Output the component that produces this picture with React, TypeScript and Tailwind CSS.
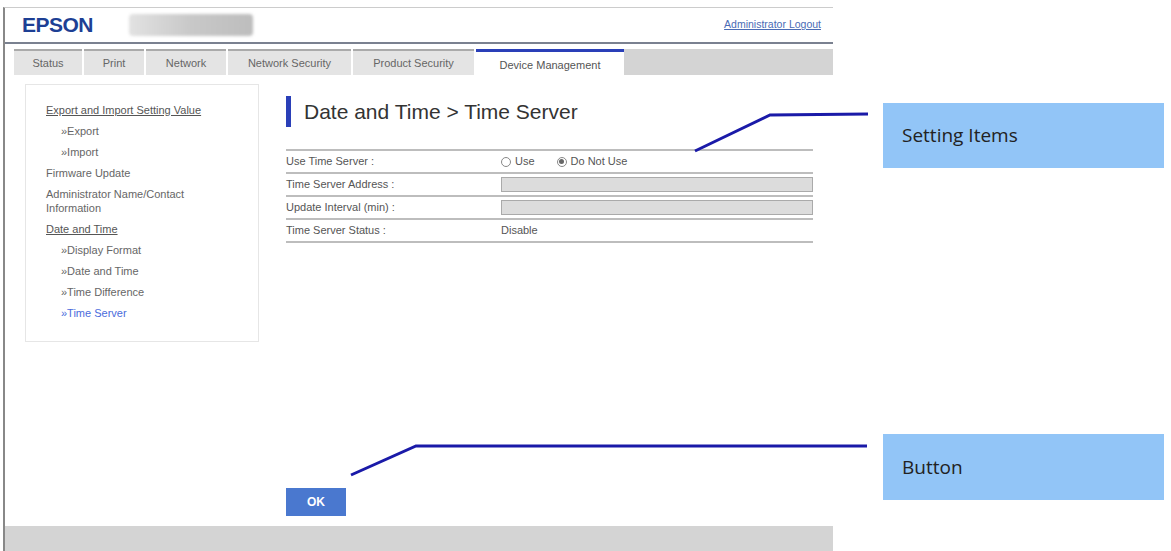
const tabs = [
  { label: "Status", w: "w-[68px]" },
  { label: "Print", w: "w-[60px]" },
  { label: "Network", w: "w-[80px]" },
  { label: "Network Security", w: "w-[123px]" },
  { label: "Product Security", w: "w-[121px]" },
];

const side = [
  { label: "Export and Import Setting Value", head: true },
  { label: "»Export", sub: true },
  { label: "»Import", sub: true },
  { label: "Firmware Update" },
  { label: "Administrator Name/Contact Information" },
  { label: "Date and Time", head: true },
  { label: "»Display Format", sub: true },
  { label: "»Date and Time", sub: true },
  { label: "»Time Difference", sub: true },
  { label: "»Time Server", sub: true, active: true },
];

function Row({ label, children }: { label: string; children: React.ReactNode }) {
  return (
    <div className="flex h-[23px] items-center border-b-2 border-[#bdbdbd]">
      <div className="w-[215px] text-[11px] text-[#555]">{label}</div>
      <div className="flex flex-1 items-center text-[11px] text-[#555]">{children}</div>
    </div>
  );
}

export default function App() {
  return (
    <div
      className="relative flex h-[551px] w-[1171px] overflow-hidden bg-white"
      style={{ fontFamily: "Arial, 'Liberation Sans', sans-serif" }}
    >
      <div className="mt-[7px] flex w-[830px] flex-col border-t border-l-2 border-[#ccc] border-l-[#888] ml-[3px]">
        <div className="flex h-[36px] items-center border-b-2 border-[#7a8190] pl-[17px] pr-[12px]">
          <span className="text-[21px] font-bold tracking-tight text-[#1d3f94]">EPSON</span>
          <div className="ml-[36px] h-[22px] w-[124px] rounded-sm bg-gradient-to-r from-[#e2e2e2] via-[#c8c8c8] to-[#bdbdbd] blur-[1.5px]" />
          <a className="ml-auto text-[10.5px] text-[#4a6bb5] underline">Administrator Logout</a>
        </div>
        <div className="mt-[5px] flex h-[26px] pl-[9px]">
          {tabs.map((t) => (
            <div
              key={t.label}
              className={`${t.w} mr-[2px] flex items-center justify-center border-t-2 border-[#aaa] bg-[#e4e4e4] text-[11px] text-[#666]`}
            >
              {t.label}
            </div>
          ))}
          <div className="flex w-[148px] items-center justify-center border-t-[3px] border-[#2a3fb8] bg-white pt-[4px] text-[11px] text-[#555]">
            Device Management
          </div>
          <div className="flex-1 bg-[#d4d4d4]" />
        </div>
        <div className="flex flex-1 px-[20px] pt-[9px]">
          <div className="h-[258px] w-[234px] border border-[#e6e6e6] pl-[20px] pt-[18px] text-[11px] leading-[14px] text-[#666]">
            {side.map((s) => (
              <div
                key={s.label}
                className={`${s.sub ? "pl-[15px] mb-[7px]" : "mb-[7px] pr-[30px]"} ${s.head ? "underline text-[#555]" : ""} ${s.active ? "text-[#4a6bdc]" : ""}`}
              >
                {s.label}
              </div>
            ))}
          </div>
          <div className="ml-[27px] flex flex-1 flex-col pr-0">
            <div className="mt-[12px] flex h-[31px] items-center">
              <div className="h-[31px] w-[5px] bg-[#2a3fb8]" />
              <span className="ml-[13px] text-[21px] text-[#333]">Date and Time &gt; Time Server</span>
            </div>
            <div className="mt-[22px] border-t-2 border-[#bdbdbd]">
              <Row label="Use Time Server :">
                <span className="mr-[4px] inline-block h-[10px] w-[10px] rounded-full border border-[#888]" />
                <span>Use</span>
                <span className="ml-[22px] mr-[4px] inline-flex h-[10px] w-[10px] items-center justify-center rounded-full border border-[#888]">
                  <span className="h-[5px] w-[5px] rounded-full bg-[#666]" />
                </span>
                <span>Do Not Use</span>
              </Row>
              <Row label="Time Server Address :">
                <div className="h-[15px] w-full border border-[#aaa] bg-[#dcdcdc]" />
              </Row>
              <Row label="Update Interval (min) :">
                <div className="h-[15px] w-full border border-[#aaa] bg-[#dcdcdc]" />
              </Row>
              <Row label="Time Server Status :">Disable</Row>
            </div>
            <div className="mt-auto mb-[10px]">
              <button className="h-[28px] w-[60px] bg-[#4a78cf] text-[12px] font-bold text-white">OK</button>
            </div>
          </div>
        </div>
        <div className="h-[25px] bg-[#d4d4d4]" />
      </div>
      <div className="ml-[50px] flex flex-col">
        <div className="mt-[103px] flex h-[65px] w-[281px] items-center bg-[#92c5f7] pl-[19px] text-[19px] text-[#222]" style={{ fontFamily: "'Open Sans', sans-serif" }}>
          Setting Items
        </div>
        <div className="mt-[266px] flex h-[66px] w-[281px] items-center bg-[#92c5f7] pl-[19px] text-[19px] text-[#222]" style={{ fontFamily: "'Open Sans', sans-serif" }}>
          Button
        </div>
      </div>
      <svg className="pointer-events-none absolute inset-0" width="1171" height="551">
        <polyline points="868,114 770,115 695,151" fill="none" stroke="#1a1aa8" strokeWidth="3" />
        <polyline points="867,446 416,446 351,475" fill="none" stroke="#1a1aa8" strokeWidth="3" />
      </svg>
    </div>
  );
}
